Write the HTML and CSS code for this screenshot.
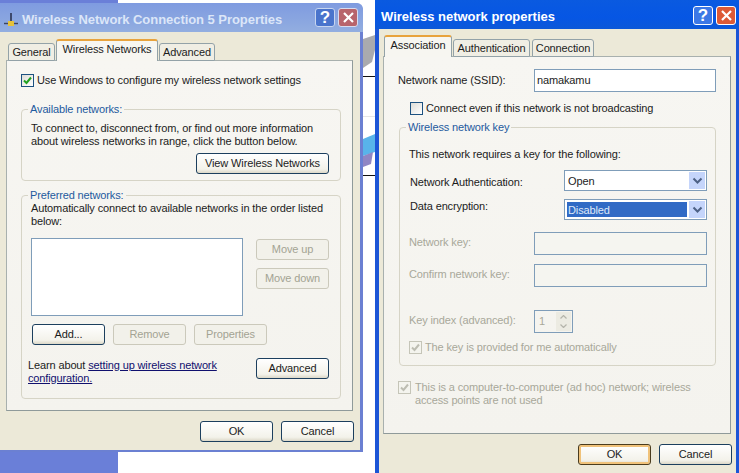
FILE: index.html
```html
<!DOCTYPE html>
<html lang="en">
<head>
<meta charset="utf-8">
<title>Wireless properties</title>
<link rel="stylesheet" href="styles.css">
</head>
<body>
<div class="desktop">
  <svg class="decor" width="12" height="180" viewBox="0 0 12 180">
    <path d="M0 39 L12 35 V50 L9 62 L0 68 Z" fill="#a9aaae"/>
    <rect x="0" y="76" width="12" height="1" fill="#111"/>
    <rect x="0" y="116" width="12" height="1" fill="#e6e6e6"/>
    <path d="M0 139 L12 134 V152 L0 156 Z" fill="#58b4ea"/>
    <path d="M0 156 L10 152 L8 164 L0 167 Z" fill="#8f86c4"/>
    <rect x="0" y="175" width="12" height="1" fill="#111"/>
  </svg>

  <section class="window window-left">
    <header class="titlebar titlebar-inactive">
      <svg class="app-icon" width="18" height="14" viewBox="0 0 18 14">
        <path d="M9 0 V11" stroke="#2b3350" stroke-width="1.6"/>
        <path d="M2 10.5 H16" stroke="#3c4460" stroke-width="1.4"/>
        <rect x="6" y="8" width="6" height="5" fill="#e6c13a"/>
      </svg>
      <h1 class="title">Wireless Network Connection 5 Properties</h1>
      <div class="caption-buttons">
        <span class="cap cap-help cap-help-inactive">?</span>
        <span class="cap cap-close cap-close-inactive"><svg width="13" height="13" viewBox="0 0 13 13"><path d="M2 2 L11 11 M11 2 L2 11" stroke="#fff" stroke-width="2.2"/></svg></span>
      </div>
    </header>
    <div class="client client-left">
      <nav class="tabs tabs-left">
        <span class="tab tab-general">General</span>
        <span class="tab tab-active tab-wireless">Wireless Networks</span>
        <span class="tab tab-advanced">Advanced</span>
      </nav>
      <div class="panel panel-left">
        <label class="check-row use-windows">
          <span class="box"><svg width="11" height="11" viewBox="0 0 11 11"><path d="M2 5.5 L4.5 8 L9 2.5" fill="none" stroke="#21a121" stroke-width="2"/></svg></span>
          <span>Use Windows to configure my wireless network settings</span>
        </label>

        <fieldset class="group group-available">
          <legend>Available networks:</legend>
          <p class="para para-available">To connect to, disconnect from, or find out more information about wireless networks in range, click the button below.</p>
          <div class="view-row"><button class="btn btn-view">View Wireless Networks</button></div>
        </fieldset>

        <fieldset class="group group-preferred">
          <legend>Preferred networks:</legend>
          <p class="para">Automatically connect to available networks in the order listed below:</p>
          <div class="list-row">
            <div class="listbox"></div>
            <div class="move-col">
              <button class="btn" disabled>Move up</button>
              <button class="btn" disabled>Move down</button>
            </div>
          </div>
          <div class="action-row">
            <button class="btn">Add...</button>
            <button class="btn" disabled>Remove</button>
            <button class="btn" disabled>Properties</button>
          </div>
          <div class="learn-row">
            <p class="learn">Learn about <a href="#">setting up wireless network</a> <a href="#">configuration.</a></p>
            <button class="btn">Advanced</button>
          </div>
        </fieldset>
      </div>
      <footer class="footer">
        <button class="btn">OK</button>
        <button class="btn">Cancel</button>
      </footer>
    </div>
  </section>

  <section class="window window-right">
    <header class="titlebar titlebar-active">
      <h1 class="title title-right">Wireless network properties</h1>
      <div class="caption-buttons">
        <span class="cap cap-help">?</span>
        <span class="cap cap-close"><svg width="13" height="13" viewBox="0 0 13 13"><path d="M2 2 L11 11 M11 2 L2 11" stroke="#fff" stroke-width="2.2"/></svg></span>
      </div>
    </header>
    <div class="client client-right">
      <nav class="tabs tabs-right">
        <span class="tab tab-active tab-association">Association</span>
        <span class="tab tab-auth">Authentication</span>
        <span class="tab tab-connection">Connection</span>
      </nav>
      <div class="panel panel-right">
        <div class="ssid-row">
          <span class="ssid-label">Network name (SSID):</span>
          <span class="field field-ssid">namakamu</span>
        </div>
        <label class="check-row broadcast">
          <span class="box box-empty"></span>
          <span>Connect even if this network is not broadcasting</span>
        </label>

        <fieldset class="group group-key">
          <legend>Wireless network key</legend>
          <p class="requires">This network requires a key for the following:</p>
          <div class="select-row select-row-auth">
            <span class="select-label">Network Authentication:</span>
            <span class="select"><span class="select-value">Open</span><span class="select-arrow"><svg width="11" height="8" viewBox="0 0 11 8"><path d="M1.5 1.5 L5.5 5.5 L9.5 1.5" fill="none" stroke="#4d6185" stroke-width="2"/></svg></span></span>
          </div>
          <div class="select-row select-row-enc">
            <span class="select-label select-label-enc">Data encryption:</span>
            <span class="select"><span class="select-value select-value-on">Disabled</span><span class="select-arrow"><svg width="11" height="8" viewBox="0 0 11 8"><path d="M1.5 1.5 L5.5 5.5 L9.5 1.5" fill="none" stroke="#4d6185" stroke-width="2"/></svg></span></span>
          </div>
          <div class="key-row key-row-first">
            <span class="key-label muted">Network key:</span>
            <span class="field field-key"></span>
          </div>
          <div class="key-row key-row-confirm">
            <span class="key-label muted">Confirm network key:</span>
            <span class="field field-key"></span>
          </div>
          <div class="key-row key-row-index">
            <span class="key-label muted">Key index (advanced):</span>
            <span class="spin">
              <span class="spin-value muted">1</span>
              <span class="spin-btns">
                <span class="spin-btn"><svg width="7" height="4" viewBox="0 0 7 4"><path d="M0.5 3.5 L3.5 0.5 L6.5 3.5" fill="none" stroke="#b4b4aa" stroke-width="1.2"/></svg></span>
                <span class="spin-btn"><svg width="7" height="4" viewBox="0 0 7 4"><path d="M0.5 0.5 L3.5 3.5 L6.5 0.5" fill="none" stroke="#b4b4aa" stroke-width="1.2"/></svg></span>
              </span>
            </span>
          </div>
          <label class="check-row auto-key muted">
            <span class="box box-off"><svg width="11" height="11" viewBox="0 0 11 11"><path d="M2 5.5 L4.5 8 L9 2.5" fill="none" stroke="#bdbdb2" stroke-width="2"/></svg></span>
            <span>The key is provided for me automatically</span>
          </label>
        </fieldset>

        <label class="check-row adhoc muted">
          <span class="box box-off"><svg width="11" height="11" viewBox="0 0 11 11"><path d="M2 5.5 L4.5 8 L9 2.5" fill="none" stroke="#bdbdb2" stroke-width="2"/></svg></span>
          <span class="adhoc-text">This is a computer-to-computer (ad hoc) network; wireless access points are not used</span>
        </label>
      </div>
      <footer class="footer">
        <button class="btn btn-default">OK</button>
        <button class="btn">Cancel</button>
      </footer>
    </div>
  </section>
</div>
</body>
</html>
```

FILE: styles.css
```css
* { box-sizing: border-box; }

html, body { margin: 0; padding: 0; }

body {
  font-family: "Liberation Sans", Arial, sans-serif;
  font-size: 11px;
  letter-spacing: -0.13px;
  line-height: 13px;
  color: #1c1c1c;
}

.desktop {
  position: relative;
  width: 739px;
  height: 473px;
  overflow: hidden;
  background: linear-gradient(90deg, #6a7fd8 118px, #fff 118px);
}

.decor { position: absolute; left: 363px; top: 0; }

.window { position: absolute; display: flex; flex-direction: column; background: #ece9d8; }

.window-left {
  left: 0; top: 3px; width: 363px; height: 449px;
  border-right: 3px solid #6b80d2;
  border-bottom: 2px solid #6b80d2;
  border-top-right-radius: 8px;
}

.window-right {
  left: 375px; top: 0; width: 364px; height: 473px;
  border-left: 4px solid #1c55d6;
  border-right: 3px solid #1c55d6;
}

.titlebar { display: flex; align-items: center; height: 29px; flex: none; }

.titlebar-inactive {
  background: linear-gradient(180deg, #7f9be0 0, #8aa6e0 60%, #93aee0 100%);
  border-top-right-radius: 6px;
  padding-left: 2px;
  margin-right: -3px;
}

.titlebar-active {
  background: linear-gradient(180deg, #0a5ae0 0, #0656e4 60%, #0c58d8 100%);
  margin: 0 -3px 0 -4px;
  padding-left: 6px;
}

.app-icon { flex: none; margin-top: 4px; }

.title {
  margin: 4px 0 0 2px;
  flex: 1;
  font-size: 13px;
  font-weight: bold;
  letter-spacing: -0.05px;
  color: #dce6f8;
}

.title-right { margin: 4px 0 0; color: #fff; letter-spacing: 0; }

.caption-buttons { display: flex; gap: 3px; padding-right: 5px; }
.titlebar-active .caption-buttons { padding-right: 3px; margin-top: 1px; }

.cap {
  display: flex;
  align-items: center;
  justify-content: center;
  width: 20px;
  height: 19px;
  border: 1px solid #fff;
  border-radius: 3px;
  font-size: 17px;
  font-weight: bold;
  color: #fff;
}

.cap-help { background: #3c78e6; }
.cap-close { background: #dd5a36; }
.cap-help-inactive { background: #4a74cc; border-color: #c8d6f0; }
.cap-close-inactive { background: #b8646c; border-color: #d8dcf0; }

.client { flex: 1; display: flex; flex-direction: column; min-height: 0; }
.client-left { padding: 7px 6px 0 6px; }
.client-right { padding: 7px 4px 0 4px; }

.tabs { display: flex; align-items: flex-end; position: relative; z-index: 1; margin-bottom: -1px; }
.tabs-left { padding-left: 2px; height: 22px; }
.tabs-right { height: 21px; padding-left: 1px; }

.tab {
  display: flex;
  align-items: center;
  justify-content: center;
  height: 18px;
  margin-right: 1px;
  padding-top: 1px;
  background: #f0eee4;
  border: 1px solid #93a2a8;
  border-bottom: 1px solid #93a2a8;
  border-radius: 3px 3px 0 0;
}

.tab-active {
  height: 22px;
  background: #f7f6f1;
  border-color: #93a2a8;
  border-top: 2px solid #e8a33d;
  border-bottom: 0;
  padding: 0 0 3px;
}

.tab-general { width: 47px; }
.tab-wireless { width: 102px; }
.tab-advanced { width: 56px; }
.tab-association { width: 68px; }
.tab-auth { width: 77px; }
.tab-connection { width: 62px; margin-left: 1px; }

.panel {
  background: linear-gradient(180deg, #f7f6f2, #f4f3ee);
  border: 1px solid #8f9a9a;
  border-left-color: #a8b0ae;
  border-top-color: #a8b0ae;
  flex: none;
}

.panel-left { height: 351px; width: 347px; padding: 12px 11px 0 14px; }
.panel-right { height: 378px; width: 348px; padding: 12px 14px 0 14px; }

.footer { display: flex; justify-content: flex-end; gap: 8px; margin-top: 10px; }

.check-row { display: flex; align-items: center; gap: 3px; height: 14px; }

.box {
  flex: none;
  display: flex;
  align-items: center;
  justify-content: center;
  width: 13px;
  height: 13px;
  border: 1px solid #1c5180;
  background: linear-gradient(135deg, #dcdcd7, #fff);
}

.box-empty { background: linear-gradient(135deg, #dcdcd7, #fff); }
.box-off { border-color: #c5c5b8; background: #f4f4ee; }

.group {
  margin: 0;
  padding: 0 11px 0 9px;
  min-width: 0;
  border: 1px solid #d6d4c6;
  border-radius: 4px;
}

.group legend {
  padding: 0 2px;
  margin-left: -3px;
  color: #1e5a9e;
  line-height: 14px;
}

.group-available { margin-top: 15px; height: 79px; }
.group-preferred { margin-top: 7px; height: 211px; }

.para { margin: 0; }
.para-available { margin-top: 6px; }

.view-row { display: flex; justify-content: flex-end; margin-top: 5px; }

.btn {
  width: 73px;
  height: 21px;
  padding: 0;
  flex: none;
  font: inherit;
  letter-spacing: inherit;
  color: #1c1c1c;
  border: 1px solid #1c3f5e;
  border-radius: 3px;
  background: linear-gradient(180deg, #fff, #f3f2ea 80%, #dcd8c8);
}

.btn:disabled {
  color: #a3a393;
  border-color: #cbc9bb;
  background: #f2f1ea;
}

.btn-view { width: 133px; }

.btn-default {
  border-color: #4a3c1e;
  box-shadow: inset 0 0 0 2px #f0c27a;
}

.list-row { display: flex; margin-top: 10px; }

.listbox { width: 212px; height: 78px; background: #fff; border: 1px solid #7f9db9; }

.move-col { display: flex; flex-direction: column; gap: 8px; margin: 1px 0 0 13px; }

.action-row { display: flex; gap: 8px; margin: 8px 0 0 1px; }

.learn-row { display: flex; justify-content: space-between; margin: 13px 0 0 -3px; }

.learn { margin: 1px 0 0; width: 195px; }
.learn a { color: #10106e; }

.ssid-row { display: flex; align-items: center; height: 23px; }
.ssid-label { width: 136px; }

.field {
  display: flex;
  align-items: center;
  height: 23px;
  border: 1px solid #7f9db9;
  background: #fff;
  padding-left: 2px;
}

.field-ssid { width: 182px; }
.field-key { width: 173px; background: #f5f5f0; }

.broadcast { margin: 9px 0 0 12px; }

.group-key { margin: 5px 0 0 1px; height: 246px; padding-right: 8px; }

.requires { margin: 13px 0 0; line-height: 14px; }

.select-row { display: flex; align-items: flex-start; margin-left: 1px; }
.select-row-auth { margin-top: 9px; }
.select-row-enc { margin-top: 8px; }

.select-label { width: 154px; margin-top: 5px; line-height: 14px; }
.select-label-enc { margin-top: 0; }

.select {
  display: flex;
  align-items: center;
  justify-content: space-between;
  width: 143px;
  height: 21px;
  padding: 2px 1px 2px 2px;
  background: #fff;
  border: 1px solid #7f9db9;
}

.select-value { flex: none; width: 120px; padding: 1px 0 0 1px; height: 15px; line-height: 15px; }
.select-value-on { background: #316ac5; color: #dfe8f8; }

.select-arrow {
  display: flex;
  align-items: center;
  justify-content: center;
  width: 16px;
  height: 17px;
  background: #c5d5fb;
}

.key-row { display: flex; align-items: flex-start; }
.key-row-first { margin-top: 12px; }
.key-row-confirm { margin-top: 9px; }
.key-row-index { margin-top: 23px; }

.key-label { width: 125px; margin-top: 3px; line-height: 14px; }

.muted { color: #a8a89a; }

.spin {
  display: flex;
  justify-content: space-between;
  width: 39px;
  height: 23px;
  padding: 1px;
  border: 1px solid #7f9db9;
}

.spin-value { padding: 3px 0 0 3px; }

.spin-btns { display: flex; flex-direction: column; width: 15px; }

.spin-btn {
  flex: 1;
  display: flex;
  align-items: center;
  justify-content: center;
  background: #ecebe2;
}

.auto-key { margin-top: 7px; }

.adhoc { margin-top: 15px; align-items: flex-start; height: auto; gap: 4px; }
.adhoc-text { width: 290px; }
```
